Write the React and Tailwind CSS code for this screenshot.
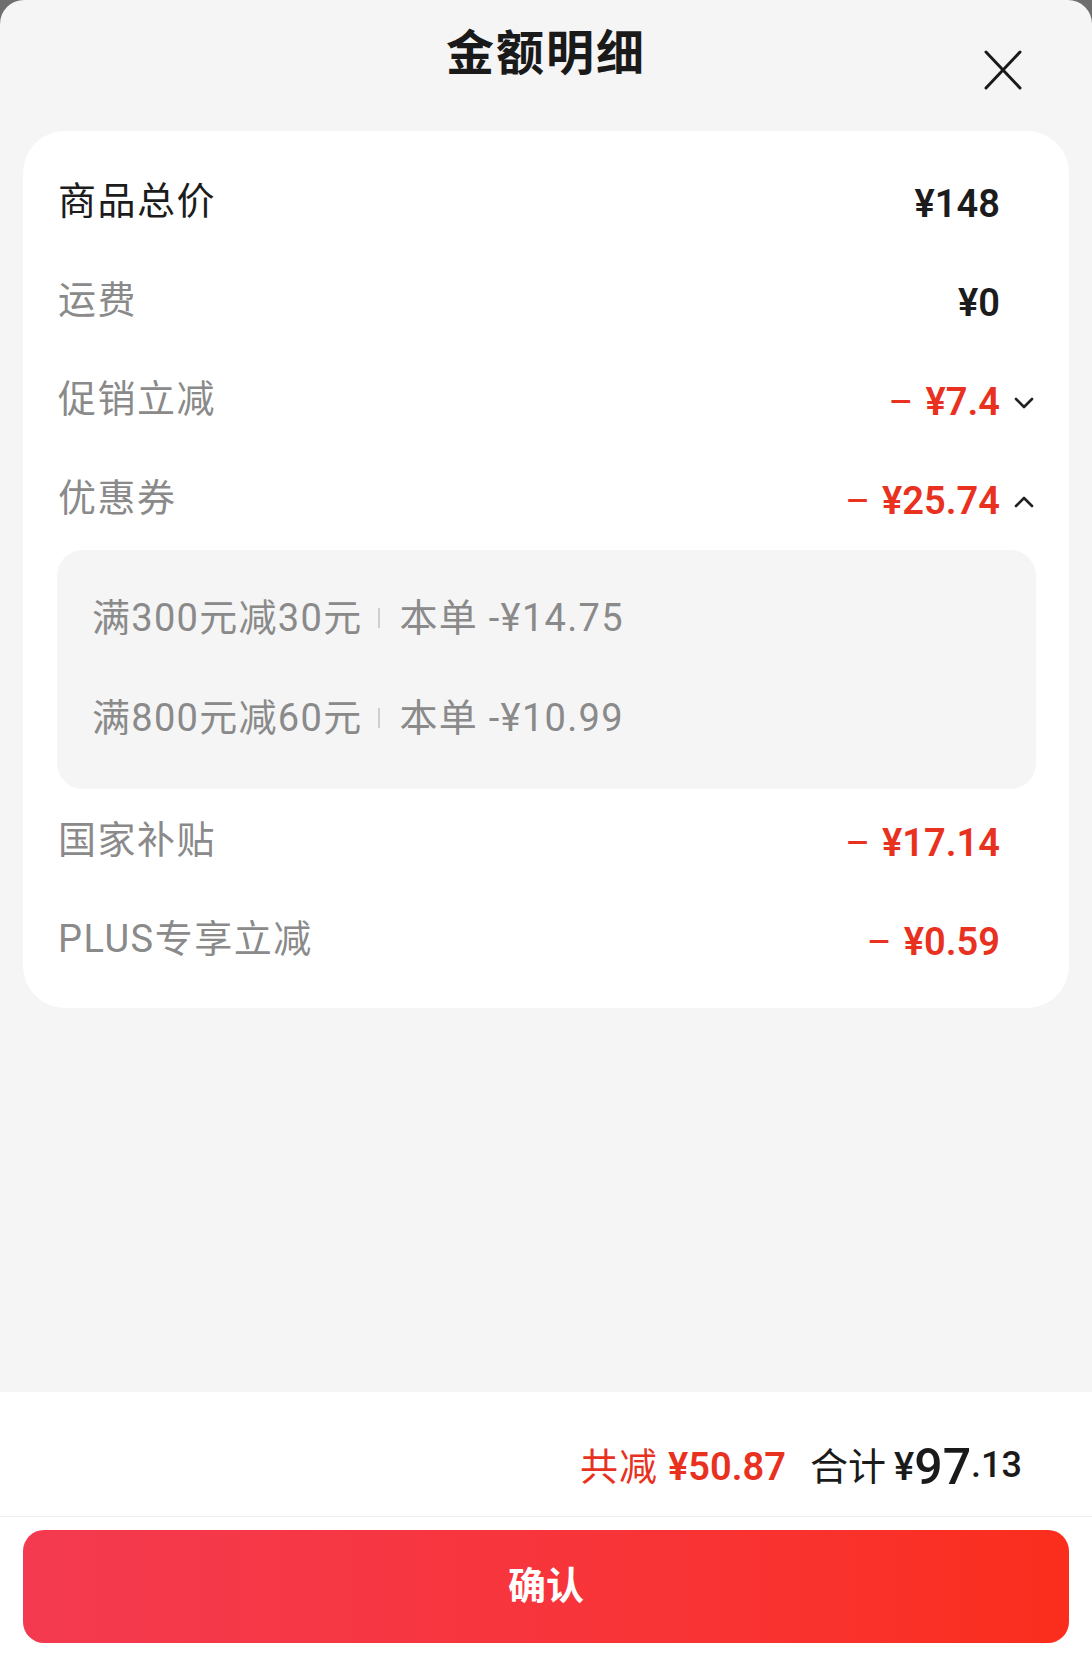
import React from "react";

const RED = "text-[#e8321f]";

function Chevron({ up }) {
  return (
    <svg
      className="absolute left-[calc(100%+13px)] top-1/2 -translate-y-1/2"
      width="22"
      height="14"
      viewBox="0 0 22 14"
      fill="none"
    >
      <path
        d={up ? "M3 11 L11 3 L19 11" : "M3 3 L11 11 L19 3"}
        stroke="#222"
        strokeWidth="2.6"
        strokeLinecap="round"
        strokeLinejoin="round"
      />
    </svg>
  );
}

function Row({ label, value, dark, minus, chevron }) {
  return (
    <div className="h-[99px] flex items-center justify-between pl-[35px] pr-[69px]">
      <span
        className={`text-[38px] tracking-[1.5px] ${
          dark ? "text-[#1c1c1c]" : "text-[#8a8a8a]"
        }`}
      >
        {label}
      </span>
      <span
        className={`relative mt-[6px] text-[38px] font-semibold ${
          minus ? RED : "text-[#1c1c1c]"
        }`}
      >
        {minus && <span className="mr-[12px] font-normal">–</span>}
        {value}
        {chevron && <Chevron up={chevron === "up"} />}
      </span>
    </div>
  );
}

export default function App() {
  const coupons = [
    { rule: "满300元减30元", off: "本单 -¥14.75" },
    { rule: "满800元减60元", off: "本单 -¥10.99" },
  ];

  return (
    <div
      className="w-full min-h-[1666px] bg-[#6e6e6e]"
      style={{ fontFamily: '"Roboto", "Noto Sans CJK SC", sans-serif' }}
    >
      <div className="h-[1666px] rounded-t-[24px] bg-[#f5f5f5] flex flex-col overflow-hidden">
        {/* header */}
        <div className="relative h-[108px] flex items-center justify-center shrink-0">
          <h1 className="text-[48px] font-bold text-[#1a1a1a] tracking-[2px]">金额明细</h1>
          <button className="absolute left-[983px] top-[49px] w-[40px] h-[42px] flex items-center justify-center">
            <svg width="38" height="40" viewBox="0 0 38 40" fill="none">
              <path d="M2 2 L36 38 M36 2 L2 38" stroke="#1a1a1a" strokeWidth="3" strokeLinecap="round" />
            </svg>
          </button>
        </div>

        {/* detail card */}
        <div className="mt-[23px] mx-[23px] bg-white rounded-[42px] pt-[21px] pb-[19px] shrink-0">
          <Row label="商品总价" value="¥148" dark />
          <Row label="运费" value="¥0" />
          <Row label="促销立减" value="¥7.4" minus chevron="down" />
          <Row label="优惠券" value="¥25.74" minus chevron="up" />

          <div className="ml-[34px] mr-[33px] my-[2px] bg-[#f5f5f5] rounded-[26px] pt-[18px] pb-[21px] pl-[35px]">
            {coupons.map((c) => (
              <div
                key={c.rule}
                className="h-[100px] flex items-center text-[38px] text-[#8a8a8a] tracking-[1.3px]"
              >
                <span>{c.rule}</span>
                <span className="ml-[16px] mr-[19px] w-[2px] h-[20px] bg-[#cfcfcf]" />
                <span>{c.off}</span>
              </div>
            ))}
          </div>

          <Row label="国家补贴" value="¥17.14" minus />
          <Row label="PLUS专享立减" value="¥0.59" minus />
        </div>

        <div className="flex-1" />

        {/* footer */}
        <div className="bg-white h-[274px] shrink-0 flex flex-col">
          <div className="h-[125px] flex items-center justify-end pr-[70px] pt-[26px] border-b border-[#eeeeee]">
            <span className={`text-[38px] tracking-[1px] ${RED}`}>共减</span>
            <span className={`ml-[10px] text-[38px] font-semibold ${RED}`}>¥50.87</span>
            <span className="ml-[24px] text-[38px] text-[#1a1a1a]">合计</span>
            <span className="ml-[8px] text-[38px] text-[#1a1a1a] font-medium">¥</span>
            <span className="text-[50px] leading-none text-[#1a1a1a] font-medium">97</span>
            <span className="text-[36px] text-[#1a1a1a] font-medium self-end mb-[24px]">.13</span>
          </div>
          <div className="mt-[13px] mx-[23px] h-[113px] rounded-[21px] bg-linear-to-r from-[#f43a50] to-[#fb2e1c] flex items-center justify-center">
            <span className="text-white text-[38px] font-bold">确认</span>
          </div>
        </div>
      </div>
    </div>
  );
}
